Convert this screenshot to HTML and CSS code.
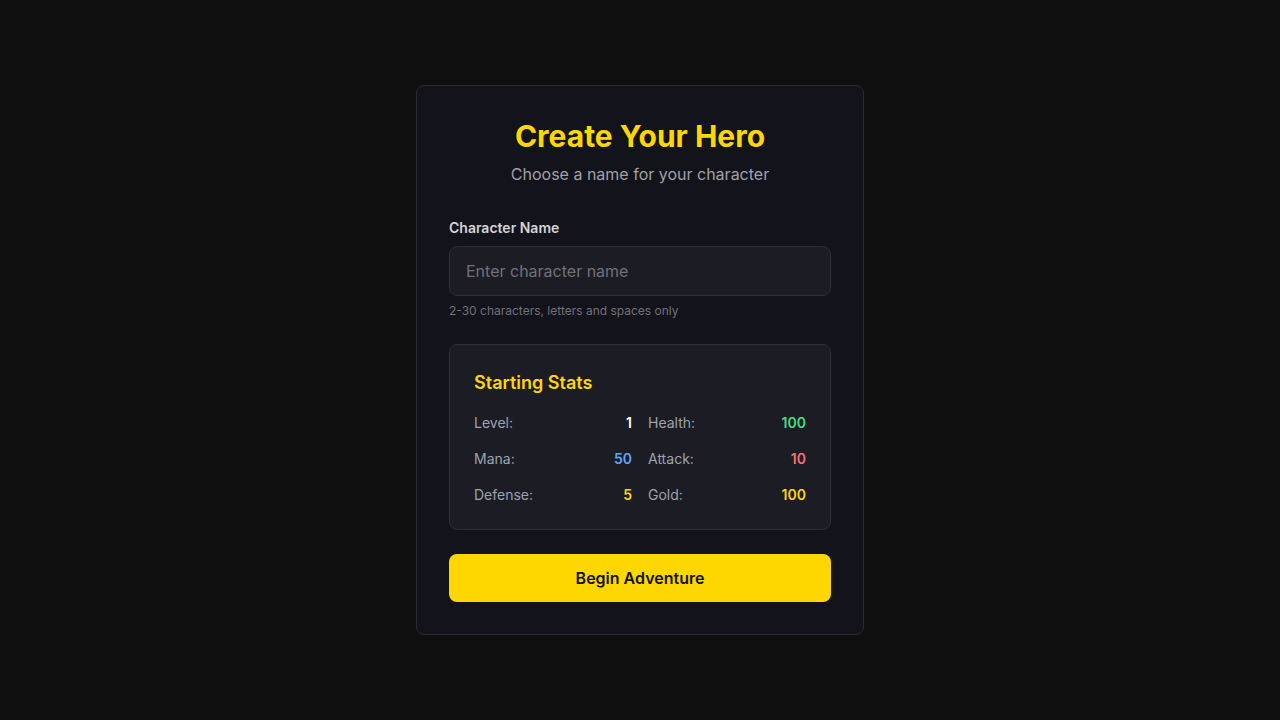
FILE: index.html
```html
<!DOCTYPE html>
<html lang="en">
<head>
<meta charset="utf-8">
<title>Create Your Hero</title>
<link rel="stylesheet" href="styles.css">
</head>
<body>
<main class="page">
  <section class="card">
    <header class="card-header">
      <h1 class="title">Create Your Hero</h1>
      <p class="subtitle">Choose a name for your character</p>
    </header>
    <div class="field">
      <label class="label" for="name">Character Name</label>
      <input class="input" id="name" type="text" placeholder="Enter character name">
      <p class="hint">2-30 characters, letters and spaces only</p>
    </div>
    <div class="stats">
      <h2 class="stats-title">Starting Stats</h2>
      <div class="stats-grid">
        <div class="stat"><span class="stat-label">Level:</span><span class="stat-value v-white">1</span></div>
        <div class="stat"><span class="stat-label">Health:</span><span class="stat-value v-green">100</span></div>
        <div class="stat"><span class="stat-label">Mana:</span><span class="stat-value v-blue">50</span></div>
        <div class="stat"><span class="stat-label">Attack:</span><span class="stat-value v-red">10</span></div>
        <div class="stat"><span class="stat-label">Defense:</span><span class="stat-value v-yellow">5</span></div>
        <div class="stat"><span class="stat-label">Gold:</span><span class="stat-value v-yellow">100</span></div>
      </div>
    </div>
    <button class="btn" type="button">Begin Adventure</button>
  </section>
</main>
</body>
</html>
```

FILE: styles.css
```css
* { box-sizing: border-box; }
html, body { margin: 0; padding: 0; }
body {
  background: #0f0f0f;
  font-family: Inter, "Noto Sans", sans-serif;
  color: #e5e7eb;
}
.page {
  min-height: 100vh;
  display: flex;
  align-items: center;
  justify-content: center;
}
.card {
  width: 448px;
  background: #13131b;
  border: 1px solid #2a2a33;
  border-radius: 8px;
  padding: 32px;
  display: flex;
  flex-direction: column;
}
.card-header { text-align: center; margin-bottom: 32px; }
.title {
  margin: 0;
  font-size: 30px;
  line-height: 36px;
  font-weight: 700;
  color: #ffd700;
}
.subtitle {
  margin: 8px 0 0;
  font-size: 16px;
  line-height: 24px;
  color: #a1a1aa;
}
.field { display: flex; flex-direction: column; margin-bottom: 24px; }
.label {
  font-size: 14px;
  line-height: 20px;
  font-weight: 600;
  color: #d4d4d8;
  margin-bottom: 8px;
}
.input {
  height: 50px;
  background: #1c1c24;
  border: 1px solid #2f2f39;
  border-radius: 8px;
  padding: 0 16px;
  font-family: inherit;
  font-size: 16px;
  color: #e5e7eb;
  outline: none;
}
.input::placeholder { color: #71717a; }
.hint {
  margin: 6px 0 0;
  font-size: 12px;
  line-height: 18px;
  color: #71717a;
}
.stats {
  background: #1c1c24;
  border: 1px solid #2f2f39;
  border-radius: 8px;
  padding: 24px;
  margin-bottom: 24px;
}
.stats-title {
  margin: 0 0 16px;
  font-size: 18px;
  line-height: 28px;
  font-weight: 600;
  color: #ffd700;
}
.stats-grid {
  display: grid;
  grid-template-columns: 1fr 1fr;
  column-gap: 16px;
  row-gap: 16px;
}
.stat {
  display: flex;
  justify-content: space-between;
  font-size: 14px;
  line-height: 20px;
}
.stat-label { color: #9ca3af; }
.stat-value { font-weight: 600; }
.v-white { color: #ffffff; }
.v-green { color: #4ade80; }
.v-blue { color: #60a5fa; }
.v-red { color: #f87171; }
.v-yellow { color: #ffd700; }
.btn {
  height: 48px;
  background: #ffd700;
  border: none;
  border-radius: 8px;
  font-family: inherit;
  font-size: 16px;
  font-weight: 600;
  color: #111111;
  cursor: pointer;
}
```
